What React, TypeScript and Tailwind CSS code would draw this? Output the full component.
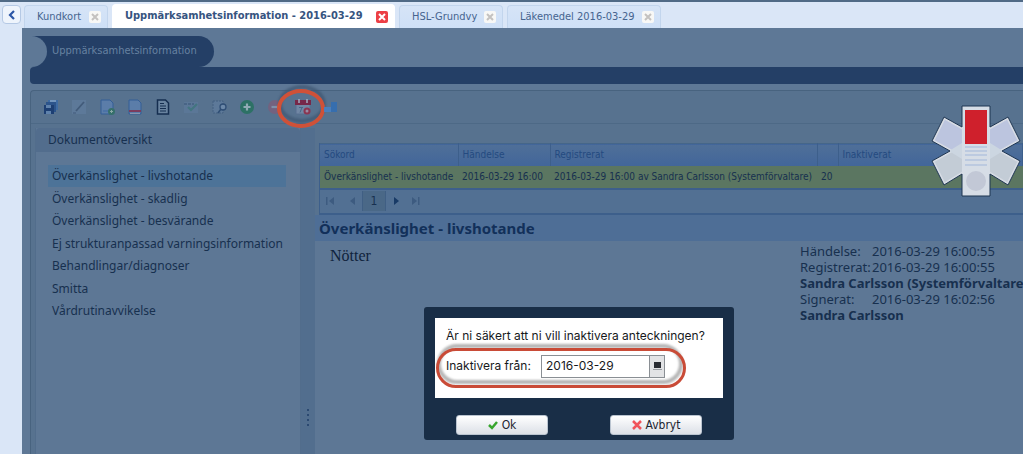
import { useState } from "react";
import type { ReactNode } from "react";

const TABS = [
  { title: "Kundkort", active: false, box: "w-[84px] mr-1" },
  { title: "Uppmärksamhetsinformation - 2016-03-29", active: true, box: "w-[283px] mr-1" },
  { title: "HSL-Grundvy", active: false, box: "w-[104px] mr-1" },
  { title: "Läkemedel 2016-03-29", active: false, box: "w-[154px]" },
];

const SECTIONS = [
  "Överkänslighet - livshotande",
  "Överkänslighet - skadlig",
  "Överkänslighet - besvärande",
  "Ej strukturanpassad varningsinformation",
  "Behandlingar/diagnoser",
  "Smitta",
  "Vårdrutinavvikelse",
];

const NARROW = "font-['DejaVu_Sans_Condensed','DejaVu_Sans',sans-serif]";

const STAR = "M31 1h28v21l18-10 12 24-18 10 18 10-12 24-18-11v22H31V69L13 80 1 56l18-10L1 36l12-24 18 10z";

function CloseIcon({ active }: { active: boolean }) {
  return (
    <svg viewBox="0 0 12 12" className="size-3">
      <rect width="12" height="12" rx="2" fill={active ? "#ec3f45" : "#f8f8f6"} />
      <path d="M3 3l6 6M9 3l-6 6" stroke={active ? "#fff" : "#c4c2c0"} strokeWidth="2" />
    </svg>
  );
}

const TOOLS: { label: string; icon: ReactNode }[] = [
  {
    label: "Spara alla",
    icon: (
      <>
        <path d="M5 1h10v10H5z" fill="#3e6ba3" />
        <path d="M7 1h6v4H7z" fill="#7396be" />
        <path d="M3 3h10v10H3z" fill="#2c548b" />
        <path d="M1 6h10v9H1z" fill="#1d3f73" />
        <path d="M3 6h5v3H3zM3 12h5v3H3z" fill="#5f82ac" />
      </>
    ),
  },
  {
    label: "Redigera",
    icon: (
      <>
        <path d="M1 1h14v14H1z" fill="#5d7999" />
        <path d="M5 12L13 3" stroke="#425b7a" strokeWidth="1.800" />
        <path d="M2 14h3" stroke="#425b7a" />
      </>
    ),
  },
  {
    label: "Nytt dokument",
    icon: (
      <>
        <path d="M2 1h9l3 3v11H2z" fill="#5b7da9" stroke="#355e96" />
        <path d="M4 12h7" stroke="#3e6ba3" />
        <circle cx="12.500" cy="12.500" r="3.500" fill="#36706b" />
        <path d="M12.500 11v3M11 12.500h3" stroke="#8aa9a6" />
      </>
    ),
  },
  {
    label: "Ta bort dokument",
    icon: (
      <>
        <path d="M2 1h9l3 3v11H2z" fill="#5b7da9" stroke="#355e96" />
        <path d="M2 11h12v2H2z" fill="#7b3c5d" />
        <path d="M3 14.500h10" stroke="#8796ae" />
      </>
    ),
  },
  {
    label: "Visa dokument",
    icon: (
      <>
        <path d="M2.500 1h8l3 3v11h-11z" fill="#69839f" stroke="#152e50" strokeWidth="1.500" />
        <path d="M5 4.500h4M5 7h6M5 9.500h6M5 12h6" stroke="#152e50" strokeWidth="1.200" />
      </>
    ),
  },
  {
    label: "Signera",
    icon: (
      <>
        <path d="M1 3h14v11H1z" fill="#5b7797" />
        <path d="M1 5h10" stroke="#496586" strokeWidth="2" strokeDasharray="3 1" />
        <path d="M5 8l3 3 6-6" fill="none" stroke="#437580" strokeWidth="2.200" />
      </>
    ),
  },
  {
    label: "Förhandsgranska",
    icon: (
      <>
        <path d="M2 2h10v12H2z" fill="#5d7999" stroke="#446181" strokeDasharray="2 1" />
        <circle cx="12" cy="8" r="3" fill="#6c88a8" stroke="#2f4e75" strokeWidth="1.300" />
        <path d="M10 10l-3 4" stroke="#2f4e75" strokeWidth="1.500" />
      </>
    ),
  },
  {
    label: "Lägg till",
    icon: (
      <>
        <circle cx="8" cy="8" r="7" fill="#2d7165" />
        <path d="M8 4.500v7M4.500 8h7" stroke="#91abb5" strokeWidth="2.200" />
      </>
    ),
  },
  {
    label: "Ta bort",
    icon: (
      <>
        <circle cx="8" cy="8" r="7" fill="#73627f" />
        <path d="M4.500 8h7" stroke="#8090a9" strokeWidth="2.200" />
      </>
    ),
  },
  {
    label: "Inaktivera",
    icon: (
      <>
        <path d="M1 2h14v13H1z" fill="#7187a4" stroke="#596f90" />
        <path d="M0 1h16v5H0z" fill="#762849" />
        <path d="M4 0v4M12 0v4" stroke="#a3acc0" strokeWidth="1.500" />
        <path d="M4 8.500h4M7 8.500l-2 5" stroke="#496788" />
        <circle cx="12" cy="12" r="3.500" fill="#8b3651" />
        <circle cx="12" cy="12" r="1.500" fill="#9a8ba3" />
      </>
    ),
  },
  {
    label: "Visa diagram",
    icon: (
      <>
        <path d="M1 8h8v5H1z" fill="#4a7fbd" />
        <path d="M8 3h6v10H8z" fill="#366eae" />
      </>
    ),
  },
];

function Tab({ title, active, box }: { title: string; active: boolean; box: string }) {
  return (
    <div
      className={`${box} flex shrink-0 items-center justify-between whitespace-nowrap rounded-t border border-b-0 pl-3 pr-1.5 text-[11px] ${
        active
          ? "h-6 border-white bg-white font-bold text-[#36547f]"
          : "h-[23px] border-[#c2d5ed] bg-linear-to-b from-[#d6e4f7] to-[#cee0f7] text-[#46648f]"
      }`}
    >
      <button type="button">{title}</button>
      <button type="button" aria-label={`Stäng ${title}`}>
        <CloseIcon active={active} />
      </button>
    </div>
  );
}

function Toolbar() {
  return (
    <div className="flex h-8 items-center gap-3 pl-3">
      {TOOLS.map((tool) => (
        <button key={tool.label} type="button" aria-label={tool.label} className="relative">
          <svg viewBox="0 0 16 16" className="size-4">
            {tool.icon}
          </svg>
          {tool.label === "Inaktivera" && (
            <>
              <span className="absolute -left-[17px] -top-[14px] h-[38px] w-12 rounded-[50%] border-4 border-[#3d5571]/70 blur-[1px]" />
              <span className="absolute -left-[18px] -top-[10px] h-[39px] w-12 rounded-[50%] border-4 border-[#cf5138]" />
            </>
          )}
        </button>
      ))}
    </div>
  );
}

function Sidebar() {
  const [selected, setSelected] = useState(SECTIONS[0]);
  return (
    <aside className="ml-1 flex w-[266px] shrink-0 flex-col border-x border-[#526d8c] bg-[#5d7795]">
      <h2 className="h-6 rounded-t bg-[#526d8d] pl-3 text-[12px] leading-6 text-[#17304f]">
        Dokumentöversikt
      </h2>
      <ul className="flex flex-col px-3 pt-[13px] text-[12px]">
        {SECTIONS.map((name) => (
          <li key={name} className="odd:h-[23px] even:h-[22px]">
            <button
              type="button"
              onClick={() => setSelected(name)}
              className={`h-[22px] w-[238px] whitespace-nowrap pl-1 text-left text-[#17304f] ${
                name === selected ? "bg-[#4d7398]" : ""
              }`}
            >
              {name}
            </button>
          </li>
        ))}
      </ul>
    </aside>
  );
}

function Pager() {
  return (
    <div className="flex h-[27px] items-center border-y-2 border-[#3d5f8b] bg-[#527093] text-[#3d5b80]">
      <button type="button" aria-label="Första sidan" className="ml-1">
        <svg viewBox="0 0 12 12" className="size-3" fill="currentColor">
          <path d="M2 2h1.500v8H2zM10 2v8L5 6z" />
        </svg>
      </button>
      <button type="button" aria-label="Föregående sida" className="ml-2.5">
        <svg viewBox="0 0 12 12" className="size-3" fill="currentColor">
          <path d="M9 2v8L4 6z" />
        </svg>
      </button>
      <span className="ml-1 flex h-5 w-6 items-center justify-center border-x border-[#405f84] bg-[#4a6887] text-[12px] text-[#17304f]">
        1
      </span>
      <button type="button" aria-label="Nästa sida" className="ml-1 text-[#183a66]">
        <svg viewBox="0 0 12 12" className="size-3" fill="currentColor">
          <path d="M4 2v8l5-4z" />
        </svg>
      </button>
      <button type="button" aria-label="Sista sidan" className="ml-2">
        <svg viewBox="0 0 12 12" className="size-3" fill="currentColor">
          <path d="M2 2v8l5-4zM8 2h1.500v8H8z" />
        </svg>
      </button>
    </div>
  );
}

function NotesGrid() {
  return (
    <div className={`ml-1 border-l border-[#3d5f8b] ${NARROW}`}>
      <table className="w-full table-fixed border-collapse whitespace-nowrap text-left text-[10px]">
        <colgroup>
          <col className="w-[138px]" />
          <col className="w-[92px]" />
          <col className="w-[267px]" />
          <col className="w-[21px]" />
          <col />
        </colgroup>
        <thead>
          <tr className="h-[22px] border-t border-[#456689] bg-linear-to-b from-[#4f6f98] to-[#42669a] text-[#244a80] [&>th]:border-r [&>th]:border-[#3d5f8b] [&>th]:px-1 [&>th]:font-normal">
            <th>Sökord</th>
            <th>Händelse</th>
            <th>Registrerat</th>
            <th></th>
            <th>Inaktiverat</th>
          </tr>
        </thead>
        <tbody>
          <tr className="h-[22px] bg-[#5b7661] text-[#17304f] [&>td]:px-1">
            <td>Överkänslighet - livshotande</td>
            <td>2016-03-29 16:00</td>
            <td>2016-03-29 16:00 av Sandra Carlsson (Systemförvaltare)</td>
            <td>20</td>
            <td></td>
          </tr>
        </tbody>
      </table>
      <Pager />
    </div>
  );
}

function Note() {
  return (
    <article className="flex grow flex-col">
      <h2 className="h-[26px] bg-[#4e6e96] pl-1 text-[15px] font-bold leading-[26px] text-[#12305a]">
        Överkänslighet - livshotande
      </h2>
      <div className="flex grow justify-between bg-[#5d7795]">
        <p className="pl-[15px] pt-[5px] font-['Liberation_Serif',serif] text-[16px] leading-5 text-[#10233c]">
          Nötter
        </p>
        <dl className="grid w-[223px] shrink-0 auto-rows-[16px] grid-cols-[72px_1fr] content-start whitespace-nowrap pt-0.5 text-[13px] leading-4 text-[#17304f]">
          <dt>Händelse:</dt>
          <dd>2016-03-29 16:00:55</dd>
          <dt>Registrerat:</dt>
          <dd>2016-03-29 16:00:55</dd>
          <dd className="col-span-2 font-bold">Sandra Carlsson (Systemförvaltare</dd>
          <dt>Signerat:</dt>
          <dd>2016-03-29 16:02:56</dd>
          <dd className="col-span-2 font-bold">Sandra Carlsson</dd>
        </dl>
      </div>
    </article>
  );
}

function WarningSymbol() {
  return (
    <svg
      viewBox="0 0 90 92"
      className="absolute right-[2px] top-[105px] h-[92px] w-[90px]"
      role="img"
      aria-label="Uppmärksamhetssymbol"
    >
      <clipPath id="star">
        <path d={STAR} />
      </clipPath>
      <g clipPath="url(#star)">
        <path d="M0 0h90v46H0z" fill="#bcc5df" />
        <path d="M0 46h90v46H0z" fill="#c3ccd6" />
        <path d={STAR} fill="none" stroke="#d7dce4" strokeWidth="4" />
        <path d="M18 46l13-8h28l13 8-13 8H31z" fill="#ccd6e1" />
        <path d="M31 1h28v90H31z" fill="#d6dde6" />
      </g>
      <path d="M34 42h22M34 46h22M34 50h22M34 55h22M34 60h22" stroke="#bccae0" strokeWidth="2" />
      <circle cx="45" cy="76" r="10" fill="#c2c8d6" />
      <path d="M34 5h22v34H34z" fill="#cf202c" />
      <path d={STAR} fill="none" stroke="#1d3450" strokeWidth="1" />
    </svg>
  );
}

function ConfirmDialog() {
  const [date, setDate] = useState("2016-03-29");
  const button = `flex h-5 w-[92px] items-center justify-center gap-1 rounded-[3px] border border-[#bac4d0] bg-linear-to-b from-white to-[#dce0e7] text-[12px] text-[#1c2430] ${NARROW}`;
  return (
    <div
      role="dialog"
      aria-label="Inaktivera anteckning"
      className="absolute left-[424px] top-[307px] w-[310px] rounded-[3px] bg-[#192e47] px-[11px] pb-[5px] pt-[11px]"
    >
      <div className="h-20 bg-white px-[11px] pt-2.5 font-[Inter,sans-serif] text-[12px] text-[#17191c]">
        <p className="h-[26px] whitespace-nowrap leading-4">Är ni säkert att ni vill inaktivera anteckningen?</p>
        <div className="relative flex h-6 items-center">
          <span className="absolute -left-[9px] -top-[10px] h-10 w-[246px] rounded-[20px] border-4 border-[#b5b5b5] blur-[1px]" />
          <span className="absolute -left-[10px] -top-[6px] h-10 w-[250px] rounded-[20px] border-3 border-[#c94b37]" />
          <label htmlFor="from-date" className="relative w-[95px] shrink-0">
            Inaktivera från:
          </label>
          <div className="relative flex h-[23px] w-[124px] border border-[#8a8f94]">
            <input
              id="from-date"
              type="text"
              value={date}
              onChange={(e) => setDate(e.target.value)}
              className="min-w-0 grow bg-white pl-1 text-[12px] outline-none"
            />
            <button
              type="button"
              aria-label="Välj datum"
              className="flex w-[15px] shrink-0 items-center justify-center border-l border-[#8a8f94] bg-[#e2e3e5]"
            >
              <svg viewBox="0 0 9 10" className="h-2.5 w-[9px]">
                <path d="M1 1h7v6H1z" fill="#292c32" />
                <path d="M0 8.500h9" stroke="#9c9fa4" />
              </svg>
            </button>
          </div>
        </div>
      </div>
      <div className="flex justify-between px-[21px] pt-[17px]">
        <button type="button" className={button}>
          <svg viewBox="0 0 10 10" className="size-2.5">
            <path d="M1 5l3 3 5-6" fill="none" stroke="#37a52e" strokeWidth="2.500" />
          </svg>
          Ok
        </button>
        <button type="button" className={button}>
          <svg viewBox="0 0 10 10" className="size-2.5">
            <path d="M1 1l8 8M9 1L1 9" stroke="#f0545b" strokeWidth="2.500" />
          </svg>
          Avbryt
        </button>
      </div>
    </div>
  );
}

export default function App() {
  return (
    <div className="relative flex min-h-screen flex-col overflow-hidden bg-[#dae6f7] font-['Noto_Sans',sans-serif]">
      <header className={`flex h-7 items-end border-t-2 border-[#506a86] ${NARROW}`}>
        <button
          type="button"
          aria-label="Dölj menyn"
          className="mb-1 ml-0.5 mr-[3px] flex size-[19px] shrink-0 items-center justify-center rounded border border-[#b5c9e5] bg-[#eef4fc]"
        >
          <svg viewBox="0 0 10 10" className="size-2.5">
            <path d="M7 1L3 5l4 4" fill="none" stroke="#2b56a6" strokeWidth="2.200" />
          </svg>
        </button>
        {TABS.map((tab) => (
          <Tab key={tab.title} {...tab} />
        ))}
      </header>

      <main className="ml-[22px] flex grow flex-col bg-[#5e7896] pl-2 pt-2">
        <nav
          aria-label="Sökväg"
          className={`relative flex h-[31px] w-[184px] items-center overflow-hidden whitespace-nowrap rounded-r-full bg-[#243f66] pl-[22px] text-[11px] text-[#6782a1] ${NARROW}`}
        >
          <span className="absolute -left-[14px] top-0 size-[31px] rounded-full bg-[#5e7896]" />
          <a href="#uppmarksamhet">Uppmärksamhetsinformation</a>
        </nav>
        <div className="h-[17px] rounded-l-sm bg-[#243f66]" />

        <section className="mt-1.5 flex grow flex-col rounded-tl border-l border-t border-[#48637f] bg-[#57728f]">
          <Toolbar />
          <div className="flex grow border-t border-[#4d6986] pt-1">
            <Sidebar />
            <div className="flex w-[14px] shrink-0 flex-col items-center justify-end gap-[3px] bg-[#526e8e] pb-7">
              <span className="size-0.5 bg-[#2b4971]" />
              <span className="size-0.5 bg-[#2b4971]" />
              <span className="size-0.5 bg-[#2b4971]" />
              <span className="size-0.5 bg-[#2b4971]" />
            </div>
            <div className="flex min-w-0 grow flex-col overflow-hidden pt-[15px]">
              <NotesGrid />
              <Note />
            </div>
          </div>
        </section>
      </main>

      <WarningSymbol />
      <ConfirmDialog />
    </div>
  );
}
